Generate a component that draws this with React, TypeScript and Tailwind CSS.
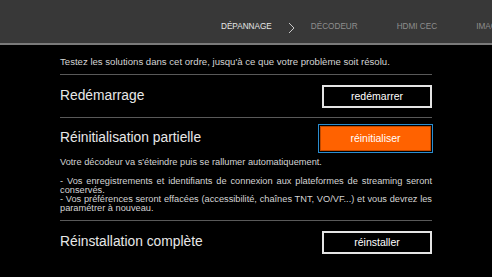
import { Fragment } from "react";

const tabs = [
  { label: "DÉPANNAGE", active: true },
  { label: "DÉCODEUR", active: false },
  { label: "HDMI CEC", active: false },
  { label: "IMAGE", active: false },
];

function Chevron() {
  return (
    <svg width="7" height="12" viewBox="0 0 7 12" className="mx-[16px] shrink-0">
      <polyline points="1,1 6,6 1,11" fill="none" stroke="#c8c8c8" strokeWidth="1" />
    </svg>
  );
}

function OutlineButton({ label }: { label: string }) {
  return (
    <button className="w-[110px] h-[23px] border-2 border-[#e4e4e4] bg-black text-[10.5px] text-white leading-none">
      {label}
    </button>
  );
}

export default function App() {
  return (
    <div className="w-[492px] h-[277px] overflow-hidden bg-black font-['Liberation_Sans','Helvetica',Arial,sans-serif] text-[#e8e8e8]">
      {/* Top nav */}
      <div className="h-[45px] bg-[#383838] border-b-2 border-[#7a7a7a] flex items-start pt-[22px] pl-[221px] whitespace-nowrap text-[8.2px] leading-[10px]">
        {tabs.map((tab, i) => (
          <Fragment key={tab.label}>
            <span className={tab.active ? "text-[#e6e6e6]" : "text-[#8e8e8e] mr-[39px]"}>{tab.label}</span>
            {i === 0 && <Chevron />}
          </Fragment>
        ))}
      </div>

      <div className="px-[60px]">
        <p className="pt-[11px] pb-[6px] text-[9.6px] leading-[12px] text-[#d4d4d4] border-b border-[#595959]">
          Testez les solutions dans cet ordre, jusqu'à ce que votre problème soit résolu.
        </p>

        {/* Redémarrage */}
        <div className="h-[43px] flex items-center justify-between border-b border-[#595959]">
          <span className="text-[13.8px]">Redémarrage</span>
          <OutlineButton label="redémarrer" />
        </div>

        {/* Réinitialisation partielle */}
        <div className="pb-[6px] border-b border-[#595959]">
          <div className="h-[40px] flex items-center justify-between">
            <span className="text-[13.8px]">Réinitialisation partielle</span>
            <button className="mr-[1px] w-[111px] h-[25px] bg-[#ff6200] border border-[#c24a00] outline outline-1 outline-offset-[1px] outline-[#2a8ccf] text-[10.5px] text-white leading-none">
              réinitialiser
            </button>
          </div>
          <div className="text-[9.25px] leading-[9.3px] text-[#d4d4d4]">
            <div>Votre décodeur va s'éteindre puis se rallumer automatiquement.</div>
            <div className="h-[9.3px]" />
            <div className="whitespace-nowrap text-justify [text-align-last:justify]">
              - Vos enregistrements et identifiants de connexion aux plateformes de streaming seront
            </div>
            <div>conservés.</div>
            <div className="whitespace-nowrap text-justify [text-align-last:justify]">
              - Vos préférences seront effacées (accessibilité, chaînes TNT, VO/VF...) et vous devrez les
            </div>
            <div>paramétrer à nouveau.</div>
          </div>
        </div>

        {/* Réinstallation complète */}
        <div className="h-[43px] flex items-center justify-between">
          <span className="text-[13.8px]">Réinstallation complète</span>
          <OutlineButton label="réinstaller" />
        </div>
      </div>
    </div>
  );
}
